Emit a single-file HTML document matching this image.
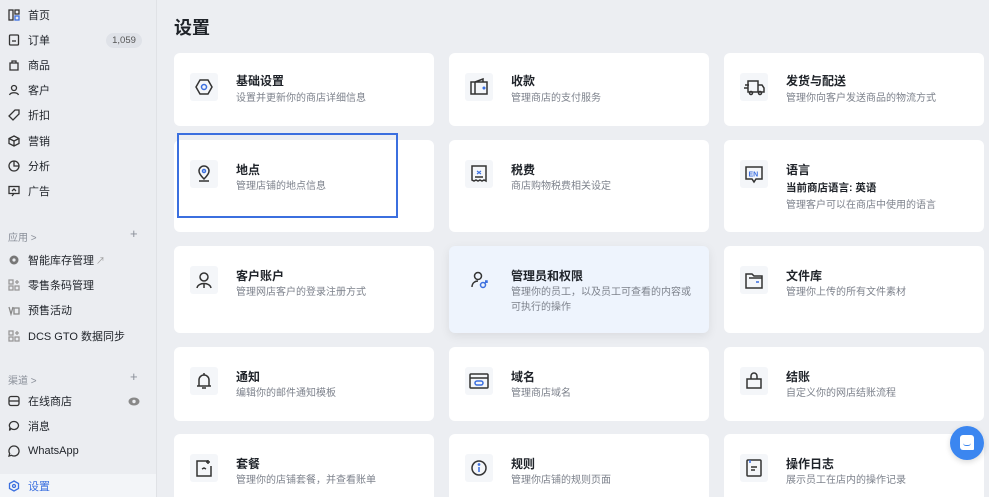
<!DOCTYPE html>
<html style="width:989px;height:497px;overflow:hidden"><head><meta charset="utf-8"><style>
*{margin:0;padding:0;box-sizing:border-box}
html,body{width:989px;height:497px;overflow:hidden}
body{background:#eceef2;font-family:"Liberation Sans","Noto Sans CJK SC",sans-serif;position:relative;color:#1f2329}
.sb{position:absolute;left:0;top:0;width:157px;height:497px;background:#ebedf1;border-right:1px solid #e0e2e6}
.ni{position:absolute;left:8px;font-size:11px;color:#1f2329;display:flex;align-items:center;height:20px}
.ni svg{width:12px;height:12px;margin-right:8px;fill:none;stroke:#333;stroke-width:1.3}
.sec{position:absolute;left:8px;font-size:10px;color:#8a8f99}
.plus{position:absolute;left:130px;font-size:13px;color:#8a8f99}
.badge{position:absolute;left:106px;top:33px;width:36px;height:15px;border-radius:8px;background:#dfe2e8;font-size:9.5px;color:#555;text-align:center;line-height:15px}
h1{position:absolute;left:174px;top:14px;font-size:18px;font-weight:bold;color:#1f2329}
.c{position:absolute;width:260px;background:#fff;border-radius:6px;overflow:hidden}
.ic{position:absolute;left:16px;width:28px;height:28px;background:#f4f6f9;border-radius:3px}
.ic svg{width:28px;height:28px;fill:none;stroke:#333;stroke-width:1.5}
.t{position:absolute;left:62px;font-size:12px;font-weight:bold;color:#1f2329}
.d{position:absolute;left:62px;font-size:10px;color:#7d828c;line-height:15px;width:185px}
</style></head><body>
<div class="sb">
<div class="ni" style="top:5px"><svg viewBox="0 0 12 12"><rect x="1" y="1" width="4" height="10"/><rect x="7" y="1" width="4" height="4"/><rect x="7" y="7" width="4" height="4" stroke="#3b6fdf"/></svg>首页</div>
<div class="ni" style="top:30px"><svg viewBox="0 0 12 12"><rect x="1.5" y="1" width="9" height="10" rx="1"/><path d="M4 7h4"/></svg>订单</div>
<div class="badge">1,059</div>
<div class="ni" style="top:55px"><svg viewBox="0 0 12 12"><path d="M2 4h8v7H2z M4 4V2h4v2"/></svg>商品</div>
<div class="ni" style="top:80px"><svg viewBox="0 0 12 12"><circle cx="6" cy="4" r="2.5"/><path d="M1.5 11c1-3 8-3 9 0"/></svg>客户</div>
<div class="ni" style="top:105px"><svg viewBox="0 0 12 12"><path d="M7 1h4v4l-6 6-4-4z"/></svg>折扣</div>
<div class="ni" style="top:131px"><svg viewBox="0 0 12 12"><path d="M6 1l5 2.5v5L6 11 1 8.5v-5zM1 3.5L6 6l5-2.5M6 6v5"/></svg>营销</div>
<div class="ni" style="top:156px"><svg viewBox="0 0 12 12"><circle cx="6" cy="6" r="5"/><path d="M6 1v5h5"/></svg>分析</div>
<div class="ni" style="top:181px"><svg viewBox="0 0 12 12"><rect x="1" y="1.5" width="10" height="7"/><path d="M4 11l2-2.5M4 6l2-2 2 2"/></svg>广告</div>
<div class="sec" style="top:229px">应用 &gt;</div><div class="plus" style="top:226px">+</div>
<div class="ni" style="top:250px"><svg viewBox="0 0 12 12"><circle cx="6" cy="6" r="4.5" fill="#777" stroke="none"/><circle cx="6" cy="6" r="1.6" fill="#ebedf1" stroke="none"/></svg>智能库存管理<span style="font-size:9px;color:#999;margin-left:2px">↗</span></div>
<div class="ni" style="top:275px"><svg viewBox="0 0 12 12" style="stroke:#999"><rect x="1" y="1" width="4" height="4"/><rect x="1" y="7" width="4" height="4"/><rect x="7" y="7" width="4" height="4"/><path d="M9 1v4M7 3h4"/></svg>零售条码管理</div>
<div class="ni" style="top:300px"><svg viewBox="0 0 12 12" style="stroke:#888"><path d="M1 3l2 7 2-7M6 4h5v6H6z"/></svg>预售活动</div>
<div class="ni" style="top:326px"><svg viewBox="0 0 12 12" style="stroke:#999"><rect x="1" y="1" width="4" height="4"/><rect x="1" y="7" width="4" height="4"/><rect x="7" y="7" width="4" height="4"/><path d="M9 1v4M7 3h4"/></svg>DCS GTO 数据同步</div>
<div class="sec" style="top:372px">渠道 &gt;</div><div class="plus" style="top:369px">+</div>
<div class="ni" style="top:391px"><svg viewBox="0 0 12 12"><rect x="1" y="1.5" width="10" height="9" rx="2"/><path d="M1 6h10"/></svg>在线商店</div>
<svg style="position:absolute;left:128px;top:397px" width="12" height="9" viewBox="0 0 12 9"><ellipse cx="6" cy="4.5" rx="5.5" ry="4" fill="#888"/><circle cx="6" cy="4.5" r="1.7" fill="#ebedf1"/></svg>
<div class="ni" style="top:416px"><svg viewBox="0 0 12 12"><path d="M6 1.5a4.5 4 0 1 1-3 7L1.5 10.5 2 7.5A4.5 4 0 0 1 6 1.5z"/></svg>消息</div>
<div class="ni" style="top:441px"><svg viewBox="0 0 12 12"><path d="M6 1a5 5 0 1 1-2.5 9.3L1 11l.7-2.4A5 5 0 0 1 6 1z"/></svg>WhatsApp</div>
<div style="position:absolute;left:0;top:474px;width:156px;height:23px;background:#f3f5f8"></div>
<div class="ni" style="top:476px;color:#3b6fdf"><svg viewBox="0 0 12 12" style="stroke:#3b6fdf"><path d="M6 1l4.5 2.5v5L6 11 1.5 8.5v-5z"/><circle cx="6" cy="6" r="1.5"/></svg>设置</div>
</div>
<h1>设置</h1>

<div class="c" style="left:174px;top:53px;height:73px"><div class="ic" style="top:20px"><svg viewBox="0 0 28 28"><path d="M10 7h8l4 7-4 7h-8l-4-7z"/><circle cx="14" cy="14" r="2.5" stroke="#3b6fdf"/></svg></div><div class="t" style="top:19px">基础设置</div><div class="d" style="top:38px">设置并更新你的商店详细信息</div></div>
<div class="c" style="left:449px;top:53px;height:73px"><div class="ic" style="top:20px"><svg viewBox="0 0 28 28"><path d="M6 9h16v12H6zM10 9V21M10 9l8-3v3" /><circle cx="19" cy="15" r="0.8" fill="#3b6fdf" stroke="#3b6fdf"/></svg></div><div class="t" style="top:19px">收款</div><div class="d" style="top:38px">管理商店的支付服务</div></div>
<div class="c" style="left:724px;top:53px;height:73px"><div class="ic" style="top:20px"><svg viewBox="0 0 28 28"><path d="M8 8h10v11H8zM18 12h4l2 3v4h-6M5 12h4M4 15h4"/><circle cx="11" cy="20" r="1.5"/><circle cx="20" cy="20" r="1.5"/></svg></div><div class="t" style="top:19px">发货与配送</div><div class="d" style="top:38px">管理你向客户发送商品的物流方式</div></div>

<div class="c" style="left:174px;top:140px;height:92px"><div class="ic" style="top:20px"><svg viewBox="0 0 28 28"><path d="M14 19c-4-4-5-6-5-8a5 5 0 0 1 10 0c0 2-1 4-5 8zM9 21h10"/><circle cx="14" cy="11" r="1.5" stroke="#3b6fdf"/></svg></div><div class="t" style="top:21px">地点</div><div class="d" style="top:39px">管理店铺的地点信息</div></div>
<div style="position:absolute;left:177px;top:133px;width:221px;height:85px;border:2px solid #3b6fdf"></div>
<div class="c" style="left:449px;top:140px;height:92px"><div class="ic" style="top:20px"><svg viewBox="0 0 28 28"><path d="M7 6h14v15l-2-1-2 1-2-1-2 1-2-1-2 1-2-1zM10 17h8"/><path d="M12 11l4 3M12 14l4-3" stroke="#3b6fdf" stroke-width="1.1"/></svg></div><div class="t" style="top:21px">税费</div><div class="d" style="top:39px">商店购物税费相关设定</div></div>
<div class="c" style="left:724px;top:140px;height:92px"><div class="ic" style="top:20px"><svg viewBox="0 0 28 28"><path d="M6 7h16v12h-6l-2 3-2-3H6z"/><text x="8.5" y="16.5" font-size="7" font-weight="bold" fill="#3b6fdf" stroke="none" font-family="Liberation Sans">EN</text></svg></div><div class="t" style="top:21px">语言</div><div class="t" style="top:40px;font-size:10.5px">当前商店语言: 英语</div><div class="d" style="top:58px">管理客户可以在商店中使用的语言</div></div>

<div class="c" style="left:174px;top:246px;height:87px"><div class="ic" style="top:20px"><svg viewBox="0 0 28 28"><circle cx="14" cy="11" r="4"/><path d="M7 22c1-6 13-6 14 0M14 18v4" /></svg></div><div class="t" style="top:21px">客户账户</div><div class="d" style="top:39px">管理网店客户的登录注册方式</div></div>
<div class="c" style="left:449px;top:246px;height:87px;background:#eef4fd;box-shadow:0 3px 10px rgba(0,0,0,.08);overflow:visible"><div class="ic" style="top:20px;background:#eef4fd"><svg viewBox="0 0 28 28"><circle cx="13" cy="10" r="3.5"/><path d="M7 21c0-4 3-6 6-6"/><circle cx="18" cy="19" r="2.5" stroke="#3b6fdf"/><path d="M20 17l2-2M20 15h2v2" stroke="#3b6fdf"/></svg></div><div class="t" style="top:21px">管理员和权限</div><div class="d" style="top:39px">管理你的员工，以及员工可查看的内容或可执行的操作</div></div>
<div class="c" style="left:724px;top:246px;height:87px"><div class="ic" style="top:20px"><svg viewBox="0 0 28 28"><path d="M6 8h6l2 2h8v12H6zM9 12h13"/><path d="M16 16h3" stroke="#3b6fdf"/></svg></div><div class="t" style="top:21px">文件库</div><div class="d" style="top:39px">管理你上传的所有文件素材</div></div>

<div class="c" style="left:174px;top:347px;height:74px"><div class="ic" style="top:20px"><svg viewBox="0 0 28 28"><path d="M9 19v-6a5 5 0 0 1 10 0v6h2H7zM14 6v2M12 21h4"/></svg></div><div class="t" style="top:21px">通知</div><div class="d" style="top:39px">编辑你的邮件通知模板</div></div>
<div class="c" style="left:449px;top:347px;height:74px"><div class="ic" style="top:20px"><svg viewBox="0 0 28 28"><rect x="5" y="7" width="18" height="14" rx="1"/><path d="M5 11h18"/><rect x="10" y="14" width="8" height="4" rx="2" stroke="#3b6fdf"/></svg></div><div class="t" style="top:21px">域名</div><div class="d" style="top:39px">管理商店域名</div></div>
<div class="c" style="left:724px;top:347px;height:74px"><div class="ic" style="top:20px"><svg viewBox="0 0 28 28"><path d="M7 12h14v9H7zM11 12V9a3 3 0 0 1 6 0v3"/></svg></div><div class="t" style="top:21px">结账</div><div class="d" style="top:39px">自定义你的网店结账流程</div></div>

<div class="c" style="left:174px;top:434px;height:63px;border-radius:6px 6px 0 0"><div class="ic" style="top:20px"><svg viewBox="0 0 28 28"><path d="M18 7H7v15h14V12M16 15l-2-1-2 1M18 6v4M16 8h4" /></svg></div><div class="t" style="top:21px">套餐</div><div class="d" style="top:39px">管理你的店铺套餐，并查看账单</div></div>
<div class="c" style="left:449px;top:434px;height:63px;border-radius:6px 6px 0 0"><div class="ic" style="top:20px"><svg viewBox="0 0 28 28"><circle cx="14" cy="14" r="7"/><path d="M14 13v5" stroke="#3b6fdf"/><circle cx="14" cy="10.5" r=".6" stroke="#3b6fdf"/></svg></div><div class="t" style="top:21px">规则</div><div class="d" style="top:39px">管理你店铺的规则页面</div></div>
<div class="c" style="left:724px;top:434px;height:63px;border-radius:6px 6px 0 0"><div class="ic" style="top:20px"><svg viewBox="0 0 28 28"><rect x="7" y="6" width="14" height="16" rx="1"/><path d="M11 13h6M11 16h4"/><path d="M10 6v3" stroke="#3b6fdf"/></svg></div><div class="t" style="top:21px">操作日志</div><div class="d" style="top:39px">展示员工在店内的操作记录</div></div>

<div style="position:absolute;left:950px;top:426px;width:34px;height:34px;border-radius:50%;background:#3b86f0;box-shadow:0 2px 6px rgba(0,0,0,.15)"><div style="position:absolute;left:10px;top:9px;width:14px;height:15px;background:#fff;border-radius:3px 3px 1px 3px"></div><div style="position:absolute;left:13px;top:17px;width:8px;height:3px;border-bottom:1.3px solid #3b86f0;border-radius:0 0 4px 4px"></div></div>
</body></html>
